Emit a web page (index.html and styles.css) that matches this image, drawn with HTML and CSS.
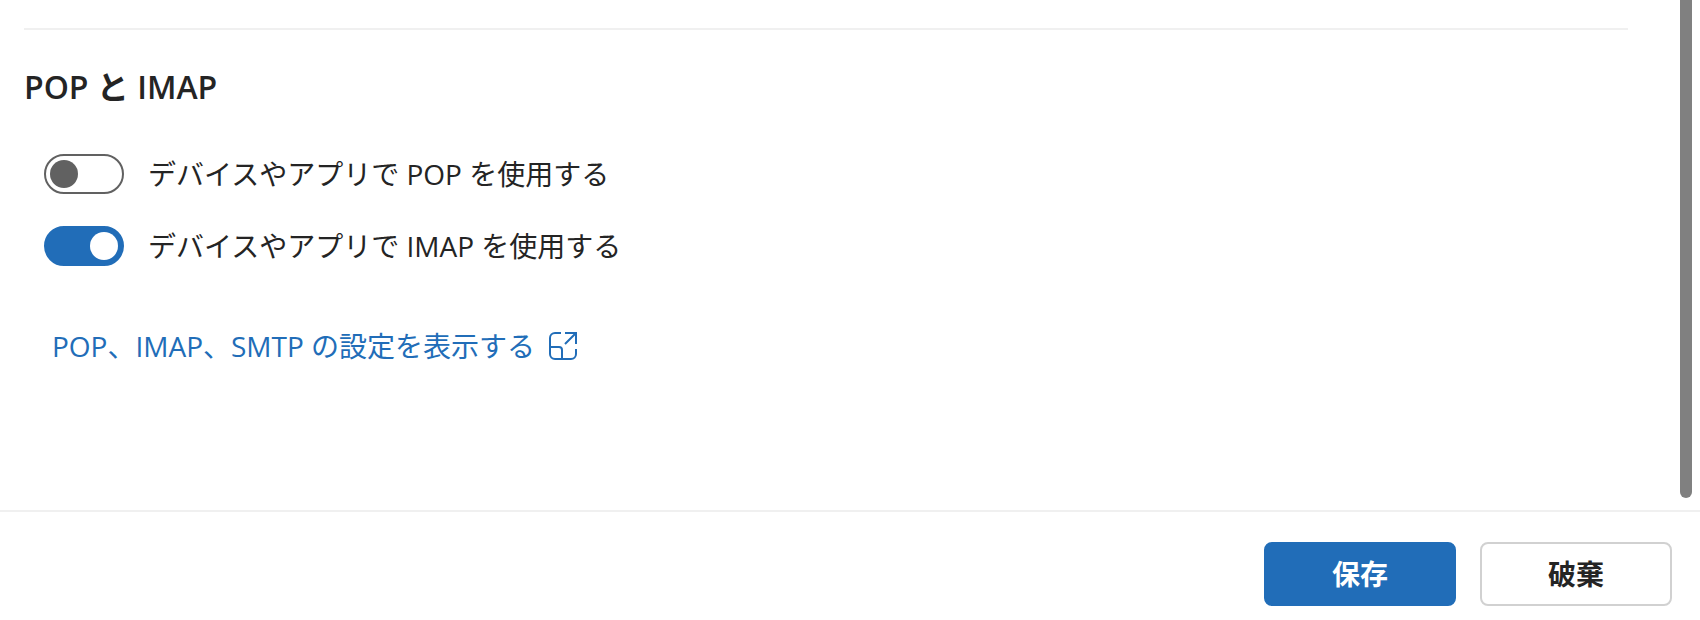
FILE: index.html
```html
<!DOCTYPE html>
<html lang="ja">
<head>
  <meta charset="UTF-8">
  <meta name="viewport" content="width=device-width, initial-scale=1.0">
  <title>POP と IMAP</title>
  <link rel="stylesheet" href="styles.css">
</head>
<body>
  <div class="panel">
    <main class="content">
      <section class="section">
        <h2 class="section-title">POP と IMAP</h2>
        <div class="option">
          <input type="checkbox" role="switch" class="switch" id="use-pop">
          <label for="use-pop">デバイスやアプリで POP を使用する</label>
        </div>
        <div class="option">
          <input type="checkbox" role="switch" class="switch" id="use-imap" checked>
          <label for="use-imap">デバイスやアプリで IMAP を使用する</label>
        </div>
        <a class="settings-link" href="#">
          <span>POP、IMAP、SMTP の設定を表示する</span>
          <svg class="link-icon" viewBox="0 0 28 28" fill="none" stroke="currentColor" stroke-width="2" aria-hidden="true">
            <path d="M12 1H6a5 5 0 0 0-5 5v16a5 5 0 0 0 5 5h16a5 5 0 0 0 5-5v-5"/>
            <path d="M1 15h9a3 3 0 0 1 3 3v9"/>
            <path d="M16 1h11v11M27 1L16 12"/>
          </svg>
        </a>
      </section>
    </main>
    <div class="scrollbar"></div>
  </div>
  <footer class="footer">
    <button type="button" class="btn btn-primary">保存</button>
    <button type="button" class="btn">破棄</button>
  </footer>
</body>
</html>
```

FILE: styles.css
```css
* {
  box-sizing: border-box;
}
body {
  font-family: 'Open Sans', 'Noto Sans CJK JP', sans-serif;
  font-size: 28px;
  line-height: 40px;
  color: #242424;
  background-color: #fff;
  margin: 0;
  display: flex;
  flex-direction: column;
  min-height: 100vh;
}
.panel {
  display: flex;
  flex: 1;
  gap: 52px;
  padding-right: 8px;
}
.content {
  flex: 1;
  padding: 28px 0 0 24px;
}
.section {
  border-top: 2px solid #f0f0f0;
  padding-top: 35px;
}
.section-title {
  font-size: 32px;
  font-weight: 600;
  line-height: 44px;
  margin: 0 0 45px;
}
.option {
  display: flex;
  align-items: center;
  gap: 24px;
  margin: 0 0 32px 20px;
}
.switch {
  appearance: none;
  display: flex;
  align-items: center;
  width: 80px;
  height: 40px;
  margin: 0;
  padding: 0 4px;
  border: 2px solid #616161;
  border-radius: 20px;
  cursor: pointer;
}
.switch::before {
  content: '';
  width: 28px;
  height: 28px;
  border-radius: 50%;
  background-color: #616161;
}
.switch:checked {
  justify-content: flex-end;
  background-color: #216db8;
  border-color: #216db8;
}
.switch:checked::before {
  background-color: #fff;
}
.settings-link {
  display: inline-flex;
  align-items: center;
  gap: 14px;
  margin: 28px 0 0 28px;
  color: #216db8;
  text-decoration: none;
}
.link-icon {
  width: 28px;
  height: 28px;
}
.scrollbar {
  width: 12px;
  margin-bottom: 12px;
  border-radius: 0 0 6px 6px;
  background-color: #808080;
}
.footer {
  display: flex;
  justify-content: flex-end;
  gap: 24px;
  padding: 30px 28px 14px;
  border-top: 2px solid #f0f0f0;
}
.btn {
  width: 192px;
  height: 64px;
  padding: 0 0 2px;
  font-family: inherit;
  font-size: 28px;
  font-weight: 600;
  color: #242424;
  background-color: #fff;
  border: 2px solid #d1d1d1;
  border-radius: 8px;
  cursor: pointer;
}
.btn-primary {
  color: #fff;
  background-color: #216db8;
  border-color: #216db8;
}
```
